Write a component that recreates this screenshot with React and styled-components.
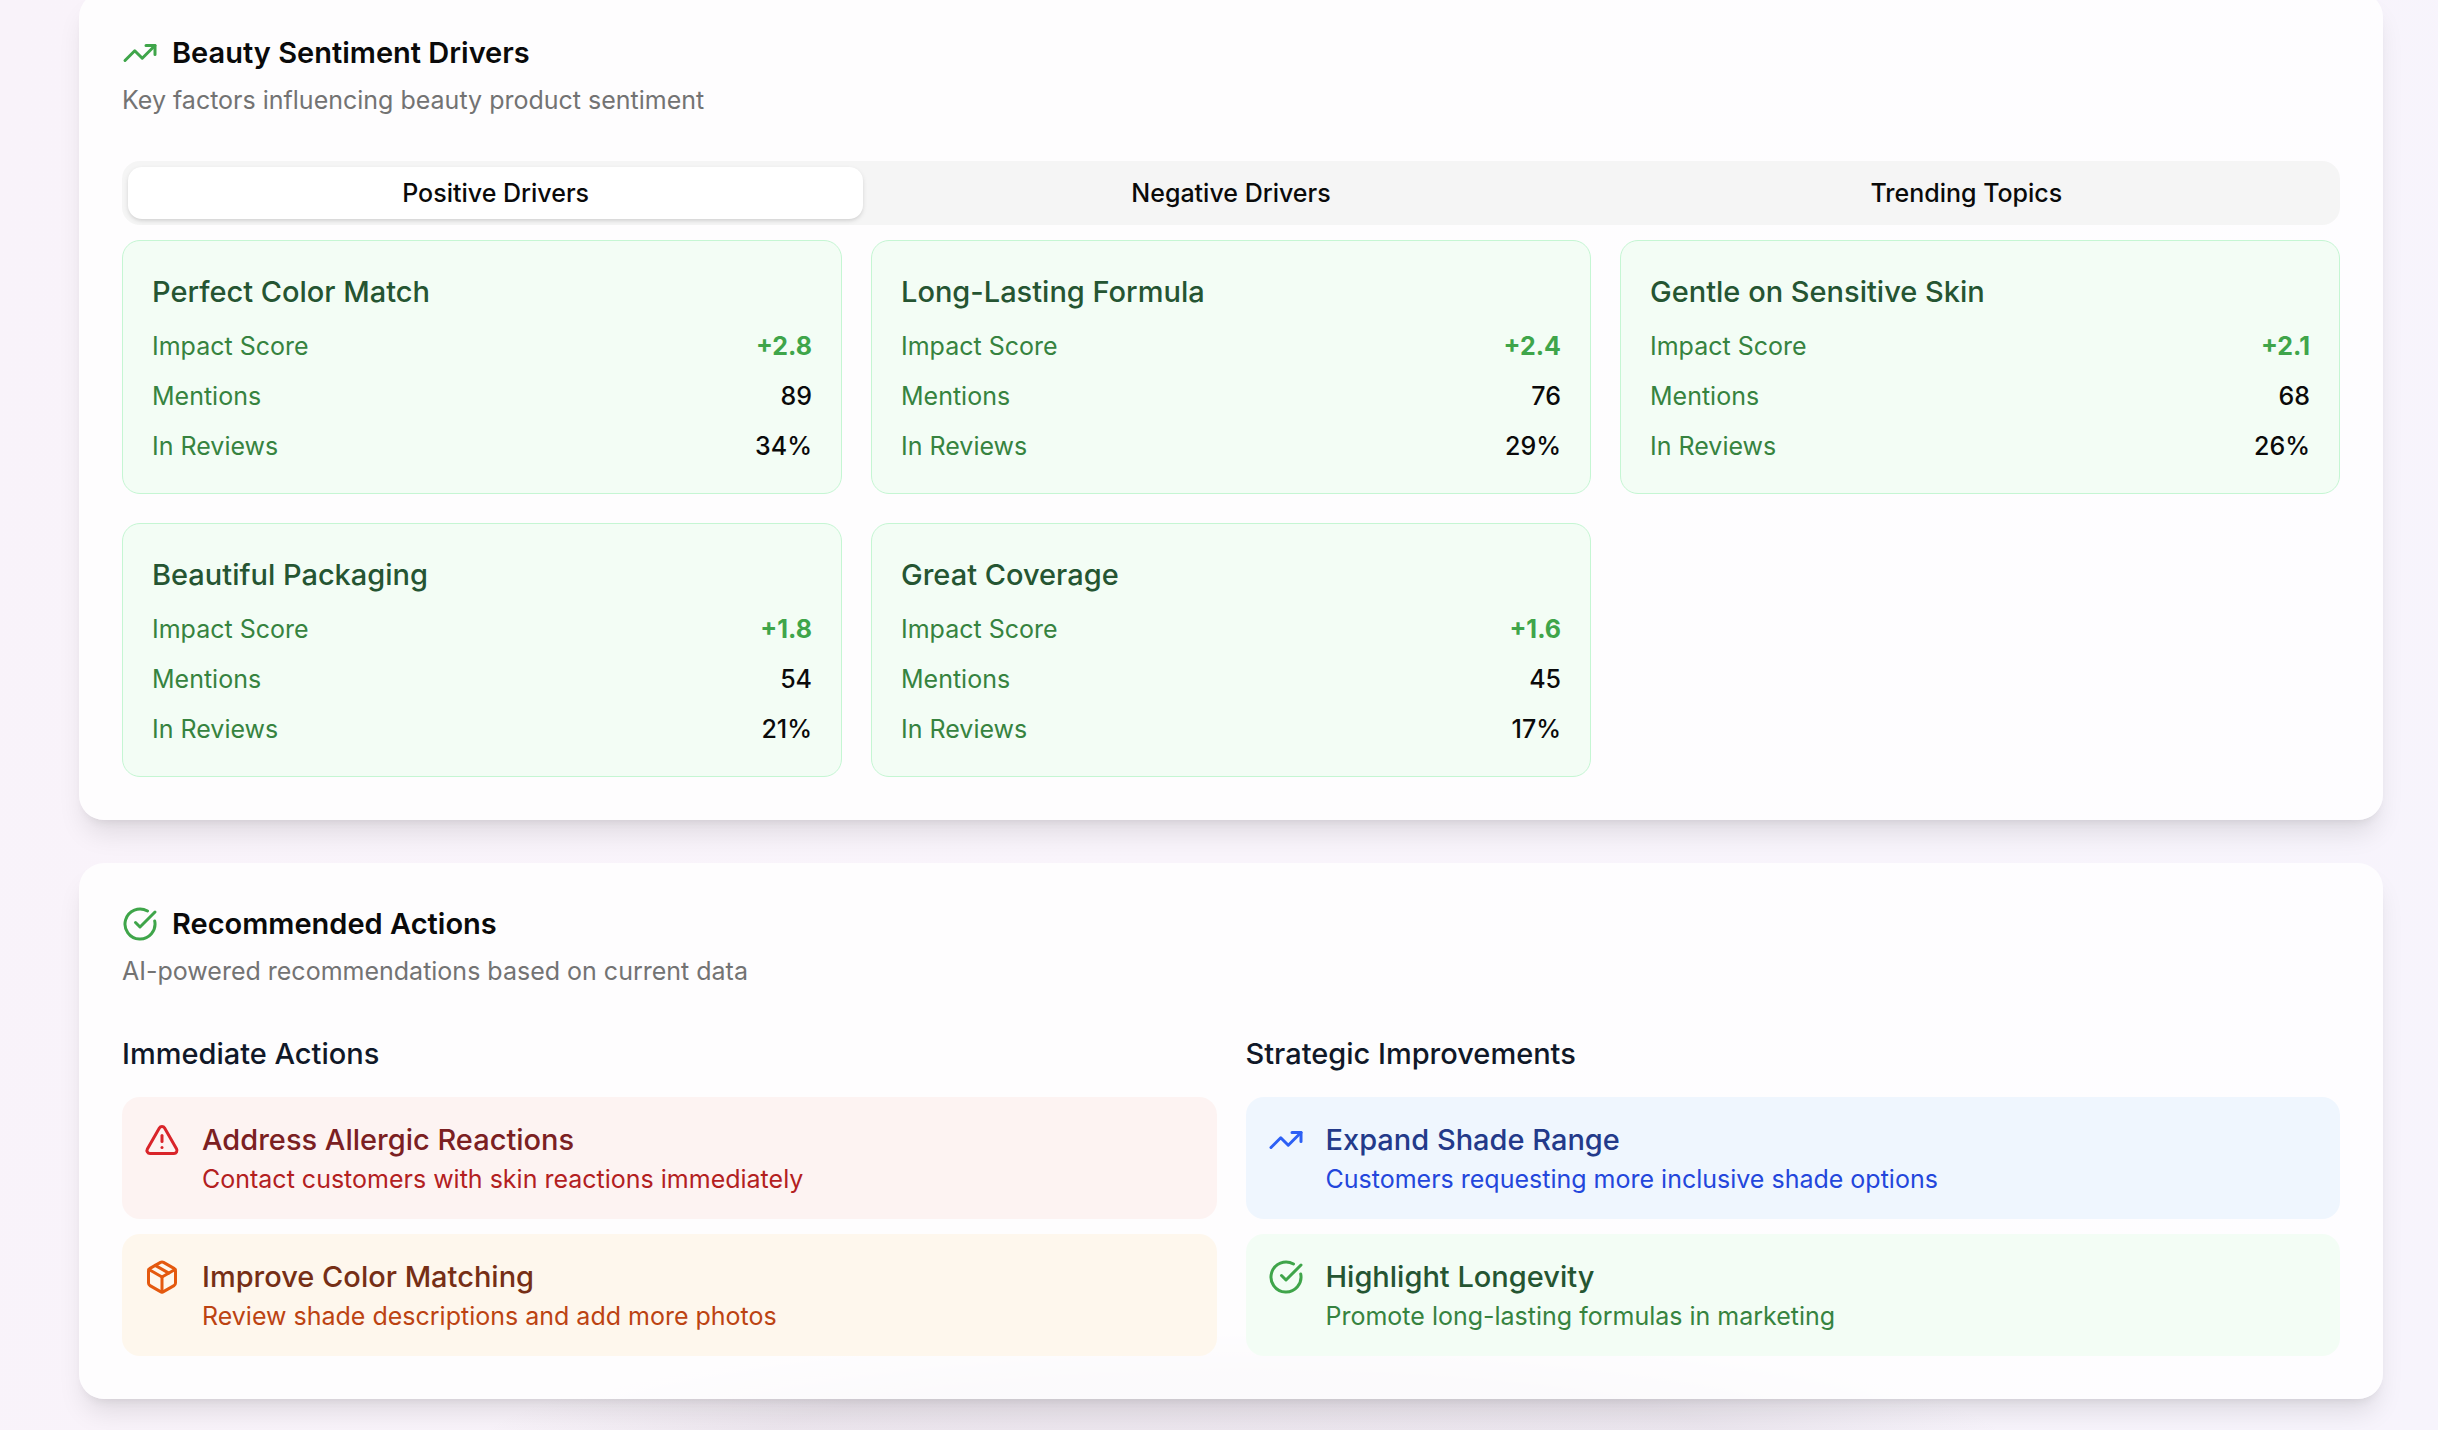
import React, { useState } from "react";
import styled, { createGlobalStyle } from "styled-components";
import { TrendingUp, CircleCheckBig, TriangleAlert, Package } from "lucide-react";

const Global = createGlobalStyle`
  *, *::before, *::after { box-sizing: border-box; }
  body {
    margin: 0;
    font-family: Inter, "Liberation Sans", sans-serif;
    color: #0a0a0a;
    background: #f9f4fb;
  }
  h2, h3, h4, p, dl, dd, ul { margin: 0; padding: 0; }
`;

const Page = styled.main`
  display: flex;
  flex-direction: column;
  gap: 43px;
  min-height: 100vh;
  padding: 0 55px 31px 79px;
  overflow: hidden;
  background:
    radial-gradient(ellipse 780px 130px at 51% 102%, rgba(110, 90, 110, 0.09) 65%, rgba(110, 90, 110, 0) 100%),
    linear-gradient(100deg, #f9f3fa 0%, #f9f4fb 50%, #f7f4fc 100%);
`;

const Card = styled.section`
  padding: 43px;
  border-radius: 25px;
  background: rgba(255, 255, 255, 0.8);
  box-shadow: 0 18px 27px -5px rgba(0, 0, 0, 0.1), 0 7px 11px -7px rgba(0, 0, 0, 0.1);

  &:first-child { margin-top: -8px; }
`;

const CardHeader = styled.header`
  display: flex;
  flex-direction: column;
  gap: 11px;
  margin-bottom: 43px;
`;

const CardTitle = styled.h2`
  display: flex;
  align-items: center;
  gap: 14px;
  font-size: 29px;
  line-height: 36px;
  font-weight: 600;

  svg { color: #3fa54a; }
`;

const Subtitle = styled.p`
  font-size: 25px;
  line-height: 36px;
  color: #737373;
`;

const TabList = styled.div`
  display: grid;
  grid-template-columns: repeat(3, 1fr);
  padding: 6px;
  margin-bottom: 15px;
  border-radius: 18px;
  background: #f5f5f5;
`;

const Tab = styled.button`
  height: 52px;
  padding: 0 14px;
  border: 0;
  border-radius: 14px;
  font: 500 25px/36px Inter, "Liberation Sans", sans-serif;
  color: #0a0a0a;
  cursor: pointer;
  background: ${(p) => (p.$active ? "#ffffff" : "transparent")};
  box-shadow: ${(p) => (p.$active ? "0 2px 5px rgba(0, 0, 0, 0.1), 0 2px 4px -2px rgba(0, 0, 0, 0.1)" : "none")};
`;

const DriverGrid = styled.div`
  display: grid;
  grid-template-columns: repeat(3, 1fr);
  gap: 29px;
`;

const DriverCard = styled.article`
  padding: 29px;
  border: 1px solid #c5f6d3;
  border-radius: 18px;
  background: #f3fdf5;
`;

const DriverName = styled.h3`
  margin-bottom: 15px;
  font-size: 29px;
  line-height: 43px;
  font-weight: 500;
  color: #255532;
`;

const Stats = styled.dl`
  display: flex;
  flex-direction: column;
  gap: 14px;
`;

const Stat = styled.div`
  display: flex;
  justify-content: space-between;
  font-size: 25px;
  line-height: 36px;

  dt { color: #36833f; }
  dd {
    font-weight: ${(p) => (p.$score ? 700 : 500)};
    color: ${(p) => (p.$score ? "#3fa54a" : "#0a0a0a")};
  }
`;

const ActionColumns = styled.div`
  display: grid;
  grid-template-columns: repeat(2, 1fr);
  gap: 29px;
`;

const ColumnTitle = styled.h3`
  margin-bottom: 22px;
  font-size: 29px;
  line-height: 43px;
  font-weight: 500;
  color: #101828;
`;

const ActionList = styled.ul`
  display: flex;
  flex-direction: column;
  gap: 15px;
  list-style: none;
`;

const tones = {
  red: { bg: "#fdf3f2", icon: "#d9242a", title: "#7b2022", text: "#b3201f" },
  orange: { bg: "#fef7ed", icon: "#e4590f", title: "#762f16", text: "#bc4312" },
  blue: { bg: "#eff6fe", icon: "#2d60f5", title: "#233a8a", text: "#2346dc" },
  green: { bg: "#f3fdf5", icon: "#3fa54a", title: "#255532", text: "#36833f" },
};

const ActionItem = styled.li`
  display: flex;
  align-items: flex-start;
  gap: 22px;
  padding: 21px 22px 22px;
  border-radius: 18px;
  background: ${(p) => tones[p.$tone].bg};

  svg { flex: none; margin-top: 4px; color: ${(p) => tones[p.$tone].icon}; }
  h4 { font-size: 29px; line-height: 43px; font-weight: 500; color: ${(p) => tones[p.$tone].title}; }
  p { font-size: 25px; line-height: 36px; color: ${(p) => tones[p.$tone].text}; }
`;

const drivers = [
  ["Perfect Color Match", "+2.8", "89", "34%"],
  ["Long-Lasting Formula", "+2.4", "76", "29%"],
  ["Gentle on Sensitive Skin", "+2.1", "68", "26%"],
  ["Beautiful Packaging", "+1.8", "54", "21%"],
  ["Great Coverage", "+1.6", "45", "17%"],
];

const tabs = ["Positive Drivers", "Negative Drivers", "Trending Topics"];

const columns = [
  {
    title: "Immediate Actions",
    items: [
      { tone: "red", Icon: TriangleAlert, title: "Address Allergic Reactions", text: "Contact customers with skin reactions immediately" },
      { tone: "orange", Icon: Package, title: "Improve Color Matching", text: "Review shade descriptions and add more photos" },
    ],
  },
  {
    title: "Strategic Improvements",
    items: [
      { tone: "blue", Icon: TrendingUp, title: "Expand Shade Range", text: "Customers requesting more inclusive shade options" },
      { tone: "green", Icon: CircleCheckBig, title: "Highlight Longevity", text: "Promote long-lasting formulas in marketing" },
    ],
  },
];

export default function App() {
  const [active, setActive] = useState(0);
  return (
    <>
      <Global />
      <Page>
        <Card>
          <CardHeader>
            <CardTitle><TrendingUp size={36} aria-hidden="true" />Beauty Sentiment Drivers</CardTitle>
            <Subtitle>Key factors influencing beauty product sentiment</Subtitle>
          </CardHeader>
          <TabList role="tablist">
            {tabs.map((t, i) => (
              <Tab key={t} type="button" role="tab" aria-selected={i === active} $active={i === active} onClick={() => setActive(i)}>
                {t}
              </Tab>
            ))}
          </TabList>
          <DriverGrid>
            {drivers.map(([name, score, mentions, share]) => (
              <DriverCard key={name}>
                <DriverName>{name}</DriverName>
                <Stats>
                  <Stat $score><dt>Impact Score</dt><dd>{score}</dd></Stat>
                  <Stat><dt>Mentions</dt><dd>{mentions}</dd></Stat>
                  <Stat><dt>In Reviews</dt><dd>{share}</dd></Stat>
                </Stats>
              </DriverCard>
            ))}
          </DriverGrid>
        </Card>
        <Card>
          <CardHeader>
            <CardTitle><CircleCheckBig size={36} aria-hidden="true" />Recommended Actions</CardTitle>
            <Subtitle>AI-powered recommendations based on current data</Subtitle>
          </CardHeader>
          <ActionColumns>
            {columns.map((c) => (
              <div key={c.title}>
                <ColumnTitle>{c.title}</ColumnTitle>
                <ActionList>
                  {c.items.map(({ tone, Icon, title, text }) => (
                    <ActionItem key={title} $tone={tone}>
                      <Icon size={36} aria-hidden="true" />
                      <div>
                        <h4>{title}</h4>
                        <p>{text}</p>
                      </div>
                    </ActionItem>
                  ))}
                </ActionList>
              </div>
            ))}
          </ActionColumns>
        </Card>
      </Page>
    </>
  );
}
